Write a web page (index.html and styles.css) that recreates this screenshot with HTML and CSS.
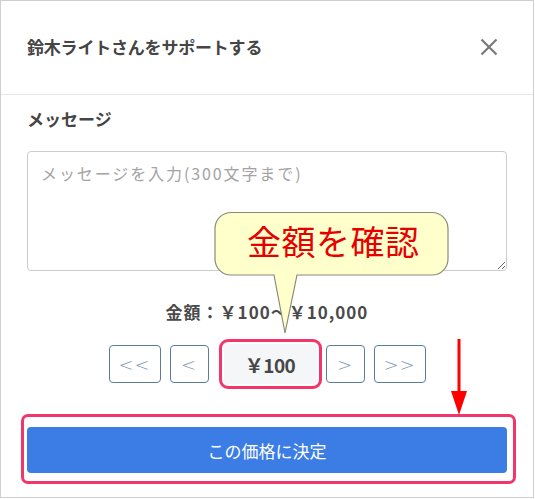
FILE: index.html
```html
<!DOCTYPE html>
<html lang="ja">
<head>
<meta charset="utf-8">
<link rel="stylesheet" href="styles.css">
</head>
<body>
<div class="modal">
  <div class="modal-header">
    <h1 class="modal-title">鈴木ライトさんをサポートする</h1>
    <button class="close-btn" aria-label="閉じる">
      <svg width="18" height="18" viewBox="0 0 18 18"><path d="M1.5 1.5 L16.5 16.5 M16.5 1.5 L1.5 16.5" stroke="#7a7a7a" stroke-width="2.2" fill="none"/></svg>
    </button>
  </div>
  <div class="modal-body">
    <div class="field-label">メッセージ</div>
    <textarea class="message" placeholder="メッセージを入力(300文字まで)"></textarea>
    <div class="range-label">金額：￥100～￥10,000</div>
    <div class="stepper">
      <button class="step wide">&lt;&lt;</button>
      <button class="step">&lt;</button>
      <div class="price">￥100</div>
      <button class="step">&gt;</button>
      <button class="step wide">&gt;&gt;</button>
    </div>
    <button class="submit">この価格に決定</button>
  </div>

  <svg class="callout" width="236" height="124" viewBox="0 0 236 124">
    <path d="M17 1.5 H218 A16 16 0 0 1 234 17.5 V48 A16 16 0 0 1 218 64 H83 L71 122 L60 64 H17 A16 16 0 0 1 1 48 V17.5 A16 16 0 0 1 17 1.5 Z" fill="#ffffcc" stroke="#8a8a7a" stroke-width="1.2"/>
  </svg>
  <div class="callout-text">金額を確認</div>

  <div class="mark-submit"></div>
  <svg class="arrow" width="18" height="78" viewBox="0 0 18 78">
    <rect x="7.5" y="0" width="3" height="54" fill="#ff0000"/>
    <path d="M1 52 H17 L9 76 Z" fill="#ff0000"/>
  </svg>
</div>
</body>
</html>
```

FILE: styles.css
```css
* { box-sizing: border-box; }
html, body { margin: 0; padding: 0; background: #fff; }
body {
  font-family: "Noto Sans CJK JP", "Noto Sans", sans-serif;
  color: #444;
}
.modal {
  position: relative;
  width: 534px;
  height: 498px;
  border: 1px solid #cfcfcf;
  background: #fff;
}
.modal-header {
  height: 94px;
  border-bottom: 1px solid #e6e6e6;
  display: flex;
  align-items: center;
  justify-content: space-between;
  padding: 0 26px 2px 26px;
}
.modal-title {
  margin: 0;
  font-size: 17px;
  font-weight: 700;
  color: #454545;
  letter-spacing: -0.2px;
}
.close-btn {
  border: 0;
  background: none;
  padding: 0;
  width: 18px;
  height: 18px;
  margin-right: 9px;
  display: flex;
}
.modal-body {
  padding: 0 26px;
  display: flex;
  flex-direction: column;
}
.field-label {
  margin-top: 12px;
  font-size: 17px;
  line-height: 24px;
  font-weight: 700;
  color: #454545;
}
.message {
  margin-top: 20px;
  width: 480px;
  height: 120px;
  border: 1px solid #cccccc;
  border-radius: 4px;
  padding: 9px 13px;
  font-family: "Noto Sans CJK JP", sans-serif;
  font-size: 16px;
  letter-spacing: 1.9px;
  resize: vertical;
  outline: none;
}
.message::placeholder { color: #a3a3a3; }
.range-label {
  margin-top: 29px;
  text-align: center;
  font-size: 17px;
  line-height: 24px;
  font-weight: 700;
  color: #4a4a4a;
  letter-spacing: 1px;
}
.stepper {
  margin-top: 20px;
  display: flex;
  justify-content: center;
  align-items: center;
  gap: 9px;
  height: 40px;
}
.step {
  width: 39px;
  height: 38px;
  border: 1px solid #5a7d9c;
  border-radius: 4px;
  background: #fff;
  color: #7593b0;
  font-family: "DejaVu Sans", sans-serif;
  font-weight: 200;
  font-size: 18px;
  letter-spacing: 1px;
  padding: 0;
}
.step.wide { width: 52px; }
.price {
  width: 93px;
  height: 40px;
  margin: 0 0 0 6px;
  background: #f5f6f8;
  border-radius: 4px;
  display: flex;
  align-items: center;
  justify-content: center;
  font-size: 19px;
  font-weight: 700;
  color: #474747;
  letter-spacing: -0.5px;
  outline: 3px solid #f2356b;
  outline-offset: 2px;
}
.submit {
  margin-top: 43px;
  width: 480px;
  height: 46px;
  border: 0;
  border-radius: 4px;
  background: #3b7de5;
  color: #fff;
  font-family: "Noto Sans CJK JP", sans-serif;
  font-size: 17px;
}
.callout {
  position: absolute;
  left: 213px;
  top: 210px;
}
.callout-text {
  position: absolute;
  left: 246px;
  top: 218px;
  font-size: 34px;
  line-height: 44px;
  color: #e60000;
  letter-spacing: 0.5px;
}
.mark-submit {
  position: absolute;
  left: 20px;
  top: 413px;
  width: 495px;
  height: 70px;
  border: 3px solid #f2356b;
  border-radius: 7px;
}
.arrow {
  position: absolute;
  left: 449px;
  top: 338px;
}
```
